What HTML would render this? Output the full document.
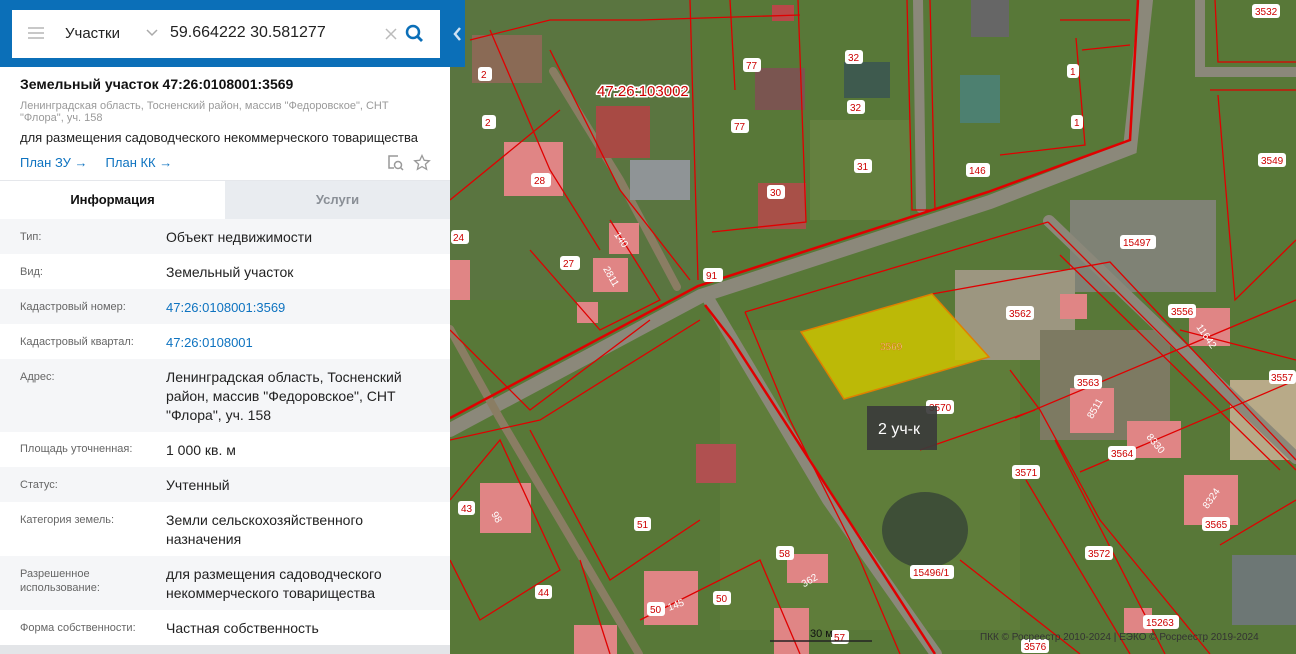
<!DOCTYPE html>
<html><head><meta charset="utf-8"><style>
*{box-sizing:border-box;margin:0;padding:0}
body{width:1296px;height:654px;overflow:hidden;position:relative;font-family:"Liberation Sans","Noto Sans CJK SC",sans-serif;background:#56703a}
#map{position:absolute;left:450px;top:0;width:846px;height:654px}
#panel{position:absolute;left:0;top:0;width:450px;height:654px;background:#fff}
#hdr{position:absolute;left:0;top:0;width:465px;height:67px;background:#0b6fb8}
#search{position:absolute;left:12px;top:10px;width:428px;height:48px;background:#fff}
.row{position:absolute;left:0;width:450px;font-size:14px;color:#222}
.row .k{position:absolute;left:20px;font-size:11px;color:#666}
.row .v{position:absolute;left:166px;line-height:19px;width:270px}
.g{background:#f5f6f8}
a{color:#0e73c0;text-decoration:none}
</style></head><body>
<svg id="map" viewBox="450 0 846 654" xmlns="http://www.w3.org/2000/svg" font-family="Liberation Sans, sans-serif">
<rect x="450" y="0" width="846" height="654" fill="#587838"/>
<rect x="450" y="0" width="250" height="300" fill="#5a7540"/>
<rect x="810" y="120" width="100" height="100" fill="#64803f"/>
<rect x="720" y="330" width="300" height="300" fill="#5f7d3a"/>
<rect x="1070" y="200" width="146" height="92" fill="#7f8275"/>
<rect x="955" y="270" width="120" height="90" fill="#9c9680"/>
<rect x="1040" y="330" width="130" height="110" fill="#7d7a62"/>
<rect x="1230" y="380" width="66" height="80" fill="#b8aa88"/>
<ellipse cx="925" cy="530" rx="43" ry="38" fill="#3e4f37"/>
<rect x="1232" y="555" width="64" height="70" fill="#6d7775"/>
<g stroke="#8b887a" fill="none" stroke-linecap="round">
<path d="M450 430 L701 296 L990 202 L1130 148 L1146 0" stroke-width="14"/>
<path d="M709 300 L828 500 L936 654" stroke-width="12"/>
<path d="M918 0 L921 208" stroke-width="10"/>
<path d="M1049 221 L1296 458" stroke-width="12"/>
<path d="M1200 0 L1200 72 L1296 72" stroke-width="10"/>
<path d="M677 287 L620 180 L553 71" stroke-width="8" stroke="#8a7d63"/>
<path d="M450 329 L499 417 L639 654" stroke-width="8" stroke="#8a7d63"/>
</g>
<g fill="#e08585">
<rect x="504" y="142" width="59" height="54"/><rect x="609" y="223" width="30" height="31"/><rect x="593" y="258" width="35" height="34"/><rect x="577" y="302" width="21" height="21"/><rect x="480" y="483" width="51" height="50"/><rect x="644" y="571" width="54" height="54"/><rect x="787" y="554" width="41" height="29"/><rect x="1189" y="308" width="41" height="38"/><rect x="1070" y="388" width="44" height="45"/><rect x="1127" y="421" width="54" height="37"/><rect x="1184" y="475" width="54" height="50"/><rect x="1060" y="294" width="27" height="25"/><rect x="1124" y="608" width="28" height="25"/><rect x="774" y="608" width="35" height="46"/><rect x="574" y="625" width="43" height="29"/><rect x="450" y="260" width="20" height="40"/>
</g>
<g>
<rect x="596" y="106" width="54" height="52" fill="#a84a44"/><rect x="696" y="444" width="40" height="39" fill="#b05050"/><rect x="758" y="183" width="48" height="46" fill="#a85048"/><rect x="472" y="35" width="70" height="48" fill="#8a6a55"/><rect x="844" y="62" width="46" height="36" fill="#3e5a4e"/><rect x="960" y="75" width="40" height="48" fill="#4d8070"/><rect x="971" y="0" width="38" height="37" fill="#666"/><rect x="755" y="68" width="50" height="42" fill="#7a5550"/><rect x="772" y="5" width="22" height="16" fill="#b84848"/><rect x="630" y="160" width="60" height="40" fill="#8f9496"/>
</g>
<g stroke="#e00000" stroke-width="1.3" fill="none">
<path d="M450 418 L698 286 L988 192 L1130 140 L1138 0" stroke-width="2.5"/>
<path d="M705 305 L732 340 L935 654" stroke-width="2.5"/>
<path d="M745 312 L1048 222"/><path d="M745 312 L790 420 L860 560 L900 654"/>
<path d="M1048 222 L1296 470"/><path d="M1060 255 L1280 470"/>
<path d="M932 294 L1110 262 L1296 460"/>
<path d="M1015 418 L1296 300"/><path d="M1080 472 L1296 380"/>
<path d="M920 450 L1035 410"/><path d="M1010 370 L1040 410 L1100 520 L1210 654"/>
<path d="M1055 440 L1165 654"/><path d="M1026 480 L1130 654"/>
<path d="M960 560 L1080 654"/>
<path d="M907 0 L912 210 L935 210 L930 0"/><path d="M798 0 L806 222 L712 232"/>
<path d="M730 0 L735 90"/><path d="M690 0 L698 280"/>
<path d="M550 50 L620 190 L690 280"/><path d="M470 40 L550 20 L640 20 L800 15"/>
<path d="M490 30 L550 170 L600 250"/><path d="M450 200 L560 110"/>
<path d="M450 330 L530 410 L650 320"/><path d="M530 250 L600 330 L660 300 L610 220"/>
<path d="M450 440 L540 420 L700 320"/><path d="M530 430 L610 580 L700 520"/>
<path d="M450 500 L500 440 L560 570 L480 620 L450 560"/>
<path d="M580 560 L610 654"/><path d="M640 620 L760 560 L800 654"/>
<path d="M1060 20 L1130 20"/><path d="M1076 38 L1085 145 L1000 155"/>
<path d="M1082 50 L1130 45"/><path d="M1215 0 L1218 62 L1296 62"/>
<path d="M1210 90 L1296 90"/><path d="M1218 95 L1235 300 L1296 240"/>
<path d="M1180 330 L1296 360"/><path d="M1220 545 L1296 500"/>
</g>
<path d="M801 332 L932 294 L989 357 L844 399 Z" fill="#c9c200" fill-opacity="0.88" stroke="#e08000" stroke-width="1.5"/>
<g font-size="10" fill="#c00">
<g fill="#fff">
<rect x="478" y="67" width="14" height="14" rx="3"/><rect x="482" y="115" width="14" height="14" rx="3"/><rect x="531" y="173" width="20" height="14" rx="3"/><rect x="451" y="230" width="18" height="14" rx="3"/><rect x="560" y="256" width="20" height="14" rx="3"/><rect x="703" y="268" width="20" height="14" rx="3"/><rect x="743" y="58" width="18" height="14" rx="3"/><rect x="731" y="119" width="18" height="14" rx="3"/><rect x="845" y="50" width="18" height="14" rx="3"/><rect x="847" y="100" width="18" height="14" rx="3"/><rect x="854" y="159" width="18" height="14" rx="3"/><rect x="767" y="185" width="18" height="14" rx="3"/><rect x="966" y="163" width="24" height="14" rx="3"/><rect x="1067" y="64" width="12" height="14" rx="3"/><rect x="1071" y="115" width="12" height="14" rx="3"/><rect x="1252" y="4" width="28" height="14" rx="3"/><rect x="1258" y="153" width="28" height="14" rx="3"/><rect x="1120" y="235" width="36" height="14" rx="3"/><rect x="1006" y="306" width="28" height="14" rx="3"/><rect x="1168" y="304" width="28" height="14" rx="3"/><rect x="1269" y="370" width="27" height="14" rx="3"/><rect x="926" y="400" width="28" height="14" rx="3"/><rect x="1074" y="375" width="28" height="14" rx="3"/><rect x="1108" y="446" width="28" height="14" rx="3"/><rect x="1012" y="465" width="28" height="14" rx="3"/><rect x="1202" y="517" width="28" height="14" rx="3"/><rect x="1085" y="546" width="28" height="14" rx="3"/><rect x="910" y="565" width="44" height="14" rx="3"/><rect x="1143" y="615" width="36" height="14" rx="3"/><rect x="1021" y="639" width="28" height="14" rx="3"/><rect x="458" y="501" width="17" height="14" rx="3"/><rect x="634" y="517" width="17" height="14" rx="3"/><rect x="535" y="585" width="17" height="14" rx="3"/><rect x="776" y="546" width="18" height="14" rx="3"/><rect x="713" y="591" width="18" height="14" rx="3"/><rect x="647" y="602" width="18" height="14" rx="3"/><rect x="831" y="630" width="18" height="14" rx="3"/>
</g>
<text x="481" y="78">2</text><text x="485" y="126">2</text><text x="534" y="184">28</text><text x="453" y="241">24</text><text x="563" y="267">27</text><text x="706" y="279">91</text><text x="746" y="69">77</text><text x="734" y="130">77</text><text x="848" y="61">32</text><text x="850" y="111">32</text><text x="857" y="170">31</text><text x="770" y="196">30</text><text x="969" y="174">146</text><text x="1070" y="75">1</text><text x="1074" y="126">1</text><text x="1255" y="15">3532</text><text x="1261" y="164">3549</text><text x="1123" y="246">15497</text><text x="1009" y="317">3562</text><text x="1171" y="315">3556</text><text x="1271" y="381">3557</text><text x="929" y="411">3570</text><text x="1077" y="386">3563</text><text x="1111" y="457">3564</text><text x="1015" y="476">3571</text><text x="1205" y="528">3565</text><text x="1088" y="557">3572</text><text x="913" y="576">15496/1</text><text x="1146" y="626">15263</text><text x="1024" y="650">3576</text><text x="461" y="512">43</text><text x="637" y="528">51</text><text x="538" y="596">44</text><text x="779" y="557">58</text><text x="716" y="602">50</text><text x="650" y="613">50</text><text x="834" y="641">57</text>
<g fill="#fff"><text x="800" y="581" transform="rotate(-30 814 577)">362</text><text x="667" y="607" transform="rotate(-20 679 603)">145</text><text x="601" y="278" transform="rotate(60 610 275)">2811</text><text x="612" y="242" transform="rotate(55 620 240)">140</text><text x="1084" y="415" transform="rotate(-60 1092 410)">8511</text><text x="1147" y="445" transform="rotate(50 1155 440)">8330</text><text x="1200" y="505" transform="rotate(-55 1208 500)">8324</text><text x="1195" y="337" transform="rotate(55 1205 333)">11642</text><text x="491" y="522" transform="rotate(60 498 518)">98</text></g>
<text x="597" y="96" font-size="15" fill="#c00" stroke="#fff" stroke-width="3" paint-order="stroke">47:26:103002</text>
<text x="880" y="350" fill="#fff" stroke="#d08000" stroke-width="0.5">3569</text>
</g>
<rect x="867" y="406" width="70" height="44" fill="#3b3b3b" fill-opacity="0.92"/>
<text x="878" y="434" font-size="16" fill="#fff">2 уч-к</text>
<path d="M770 641 L872 641" stroke="#222" stroke-width="1.5"/>
<text x="810" y="637" font-size="11" fill="#111">30 м</text>
<text x="980" y="640" font-size="10" fill="#333">ПКК © Росреестр 2010-2024 | ЕЭКО © Росреестр 2019-2024</text>
</svg>
<div id="panel">
<div id="hdr">
 <div id="search">
  <div style="position:absolute;left:16px;top:17px;width:16px;height:2px;background:#c8c8c8;box-shadow:0 5px #c8c8c8,0 10px #c8c8c8"></div>
  <div style="position:absolute;left:53px;top:15px;font-size:15px;color:#222">Участки</div>
  <svg style="position:absolute;left:134px;top:19px" width="12" height="8"><path d="M1 1 L6 6 L11 1" stroke="#aaa" stroke-width="1.5" fill="none"/></svg>
  <div style="position:absolute;left:158px;top:14px;font-size:16px;color:#222">59.664222 30.581277</div>
  <svg style="position:absolute;left:373px;top:18px" width="12" height="12"><path d="M1 1 L11 11 M11 1 L1 11" stroke="#bbb" stroke-width="1.5"/></svg>
  <svg style="position:absolute;left:393px;top:14px" width="20" height="20"><circle cx="8" cy="8" r="6" stroke="#0b6fb8" stroke-width="2.5" fill="none"/><path d="M12.5 12.5 L17 17" stroke="#0b6fb8" stroke-width="2.8"/></svg>
 </div>
 <svg style="position:absolute;left:453px;top:27px" width="9" height="14"><path d="M7 1 L2 7 L7 13" stroke="#cfe2f3" stroke-width="2.5" fill="none"/></svg>
</div>
<div style="position:absolute;left:20px;top:76px;font-size:14px;font-weight:bold;color:#111">Земельный участок 47:26:0108001:3569</div>
<div style="position:absolute;left:20px;top:100px;font-size:11px;line-height:12px;color:#9a9a9a;width:400px">Ленинградская область, Тосненский район, массив "Федоровское", СНТ "Флора", уч. 158</div>
<div style="position:absolute;left:20px;top:130px;font-size:13px;color:#222">для размещения садоводческого некоммерческого товарищества</div>
<div style="position:absolute;left:20px;top:155px;font-size:13px"><a>План ЗУ →</a><a style="margin-left:18px">План КК →</a></div>
<svg style="position:absolute;left:387px;top:154px" width="18" height="18"><path d="M11 2 H2 V14 H7" stroke="#999" stroke-width="1.5" fill="none"/><circle cx="11" cy="11" r="3.5" stroke="#999" stroke-width="1.5" fill="none"/><path d="M13.5 13.5 L16 16" stroke="#999" stroke-width="1.5"/></svg>
<svg style="position:absolute;left:413px;top:154px" width="18" height="18"><path d="M9 1.5 L11.2 6.3 L16.3 6.8 L12.4 10.2 L13.6 15.3 L9 12.6 L4.4 15.3 L5.6 10.2 L1.7 6.8 L6.8 6.3 Z" stroke="#999" stroke-width="1.3" fill="none"/></svg>
<div style="position:absolute;left:0;top:180px;width:450px;height:1px;background:#e5e7eb"></div>
<div style="position:absolute;left:0;top:181px;width:225px;height:38px;font-size:13px;font-weight:bold;color:#111;text-align:center;line-height:38px">Информация</div>
<div style="position:absolute;left:225px;top:181px;width:225px;height:38px;background:#e9ecf0;font-size:13px;font-weight:bold;color:#8a8f96;text-align:center;line-height:38px">Услуги</div>
<div class="row g" style="top:219px;height:35px"><span class="k" style="top:12px">Тип:</span><span class="v" style="top:9px">Объект недвижимости</span></div>
<div class="row" style="top:254px;height:35px"><span class="k" style="top:12px">Вид:</span><span class="v" style="top:9px">Земельный участок</span></div>
<div class="row g" style="top:289px;height:35px"><span class="k" style="top:12px">Кадастровый номер:</span><span class="v" style="top:9px;font-size:13px"><a>47:26:0108001:3569</a></span></div>
<div class="row" style="top:324px;height:35px"><span class="k" style="top:12px">Кадастровый квартал:</span><span class="v" style="top:9px;font-size:13px"><a>47:26:0108001</a></span></div>
<div class="row g" style="top:359px;height:73px"><span class="k" style="top:12px">Адрес:</span><span class="v" style="top:9px">Ленинградская область, Тосненский район, массив "Федоровское", СНТ "Флора", уч. 158</span></div>
<div class="row" style="top:432px;height:35px"><span class="k" style="top:11px">Площадь уточненная:</span><span class="v" style="top:9px">1 000 кв. м</span></div>
<div class="row g" style="top:467px;height:35px"><span class="k" style="top:12px">Статус:</span><span class="v" style="top:9px">Учтенный</span></div>
<div class="row" style="top:502px;height:54px"><span class="k" style="top:12px">Категория земель:</span><span class="v" style="top:9px">Земли сельскохозяйственного назначения</span></div>
<div class="row g" style="top:556px;height:54px"><span class="k" style="top:11px;line-height:14px">Разрешенное<br>использование:</span><span class="v" style="top:9px">для размещения садоводческого некоммерческого товарищества</span></div>
<div class="row" style="top:610px;height:35px"><span class="k" style="top:12px">Форма собственности:</span><span class="v" style="top:9px">Частная собственность</span></div>
<div style="position:absolute;left:0;top:645px;width:450px;height:9px;background:#e3e5e8"></div>
</div>
</body></html>
